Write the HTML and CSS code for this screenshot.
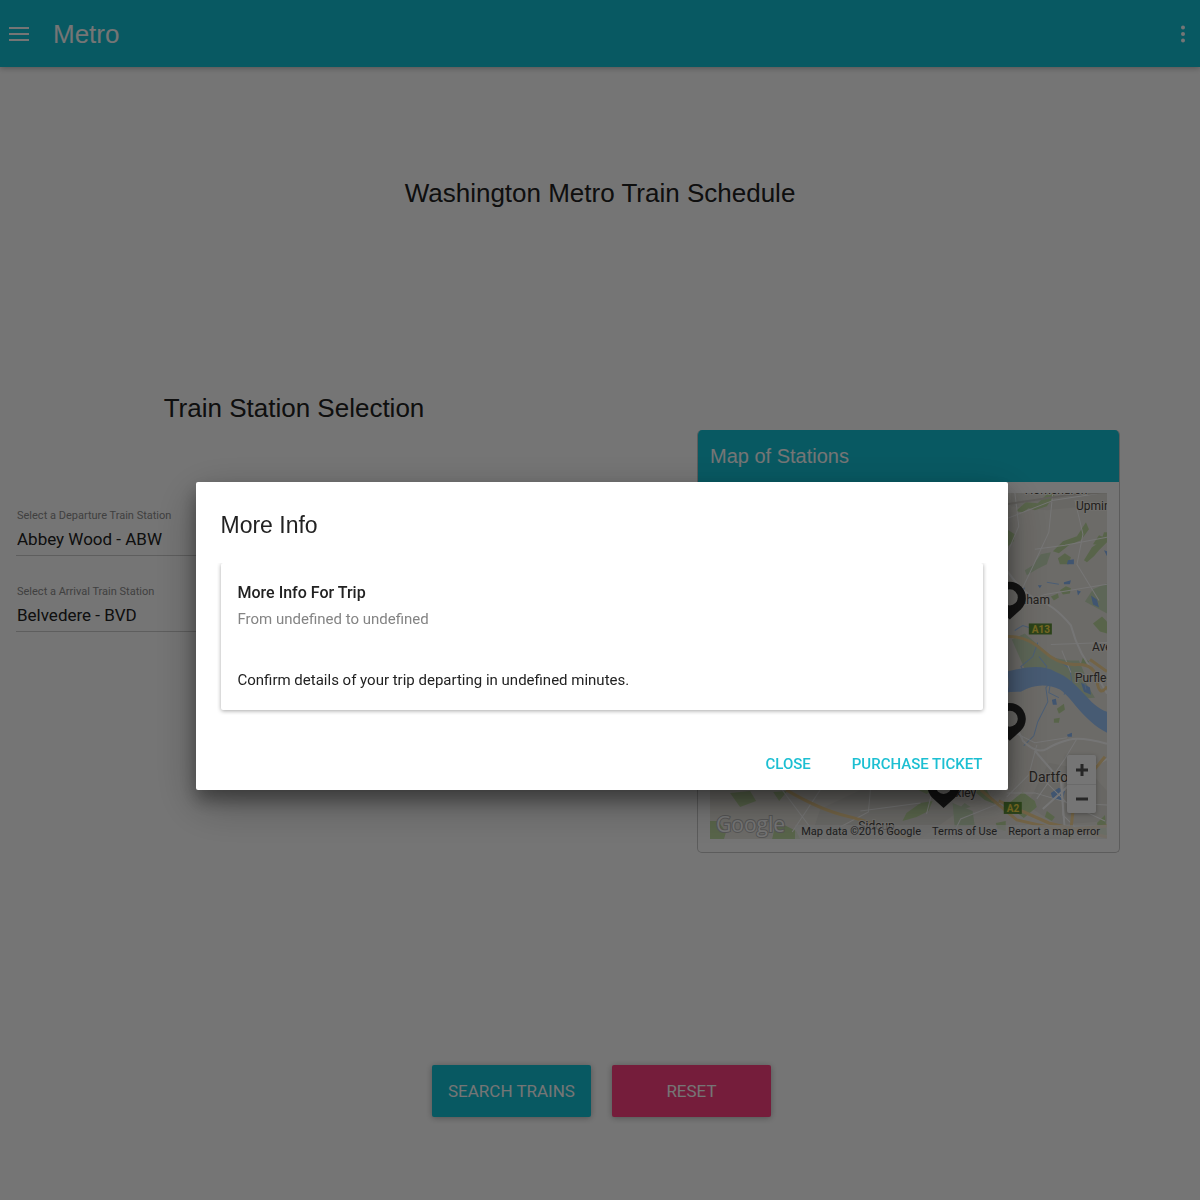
FILE: index.html
```html
<!DOCTYPE html>
<html lang="en">
<head>
<meta charset="utf-8">
<meta name="viewport" content="width=device-width, initial-scale=1">
<title>Metro</title>
<link rel="stylesheet" href="styles.css">
</head>
<body>
<header class="bar">
  <button class="icon-button" type="button" aria-label="Menu">
    <svg width="20" height="14" viewBox="0 0 20 14"><path d="M0 1h20M0 7h20M0 13h20" stroke="currentColor" stroke-width="2"/></svg>
  </button>
  <span class="brand">Metro</span>
  <button class="icon-button" type="button" aria-label="More options">
    <svg width="4" height="18" viewBox="0 0 4 18" fill="currentColor"><circle cx="2" cy="2.500" r="2"/><circle cx="2" cy="9" r="2"/><circle cx="2" cy="15.500" r="2"/></svg>
  </button>
</header>

<main>
  <h1 class="title">Washington Metro Train Schedule</h1>
  <div class="columns">
    <section class="selection">
      <h2 class="title">Train Station Selection</h2>
      <form class="fields">
        <div class="field">
          <label for="departure">Select a Departure Train Station</label>
          <select id="departure"><option>Abbey Wood - ABW</option></select>
        </div>
        <div class="field">
          <label for="arrival">Select a Arrival Train Station</label>
          <select id="arrival"><option>Belvedere - BVD</option></select>
        </div>
      </form>
    </section>

    <section class="map-card">
      <h3 class="map-heading">Map of Stations</h3>
      <div class="map-body">
        <div class="map">
          <svg class="map-canvas" viewBox="0 0 396 346" preserveAspectRatio="xMaxYMax slice">
            <rect width="396" height="346" fill="#ece9e2"/>
            <g fill="#e2e0da">
              <path d="M300 0h96v12l-60 6-36-4z"/>
              <path d="M338 270l40 8 18 20v30l-50 4-30-20z"/>
              <path d="M150 297h80l20 20-40 29h-110l10-30z"/>
            </g>
            <g fill="#c0dba2">
              <path d="M305 19l10-9 12 1 10-10h8l-9 13-12 4-6-2-6 4z"/>
              <path d="M296 37l8 5-1 7-7 6z"/>
              <path d="M342 59l10-10 14-5 9-14 3 7-8 11-12 5-10 8z"/>
              <path d="M347 66l7-5 6 4-2 7h-9z"/>
              <path d="M373 68l8-13 9-6 3-9h3v10l-8 8-5 6-7 6z"/>
              <path d="M382 52l6-9 5 2-2 8z"/>
              <path d="M340 104l7-3 1 4-5 3z"/>
              <path d="M349 98l6-4 5 2-1 5-7 1z"/>
              <path d="M382 131l9-7 5 5v12l-7-2z"/>
              <path d="M372 165l6 4-3 5-5-3z"/>
              <path d="M346 216l7-5 1 6-6 4z"/>
              <path d="M343 226l6-1-1 5h-5z"/>
              <path d="M296 312l16-13 12 9 2 6-13 11-9-7-8 3z"/>
              <path d="M386 330l8-8 2 20-7 2z"/>
              <path d="M0 328l8 0 8 11-2 7H0zM63 299l14-1-8 10zM66 328l20 10 4 8H62zM196 320l14-10 12-2-4 10-12 6-14 4zM208 297l14 0-6 4zM262 297h14l8 14-10-4zM285 330l10-2 0 10-8-2z"/>
              <path d="M20 300l20-2 6 10-16 6z"/>
              <path d="M336 318l8 6-3 4-7-4z"/>
            </g>
            <g fill="#cbdfbe">
              <path d="M322 73l8-11 10-2-4 12-10 5-10 6-2-5z"/>
              <path d="M374 109l8-12 14-6v30l-13-7z"/>
              <path d="M301 147l13-6 28 24 20 4 22 36-14 1-30-20-25-7z"/>
              <path d="M340 170l20 4 8 8-4 10-18-2zM346 168l22 0 6 14-12-4z"/>
              <path d="M242 310l20 8 2 14-20 2zM246 318l8-8 6 4z"/>
            </g>
            <g fill="#8cb9f5">
              <path d="M357 68l6-1v5h-7zM353 90l7-2-1 4h-6zM366 98l4 1-3 4zM380 103l6 4 2 8-6-3zM310 98l4-3-1 5zM327 93l4 0-2 3zM393 58l3 1v5zM341 207l4-1 1 6h-4zM370 190l9 5 1 7-7-3zM356 242l5-2v4h-4zM340 300l8-5 6 3-2 9h-10z"/>
            </g>
            <g fill="none" stroke="#a3ccff">
              <path d="M319 187l-9-13 12-10 5-14M328 164l8 10-6 8 10 6-2 12 10 5M345 166l14 10 2 14-8 12M304 138l8-5 6 2M336 90l12 2"/>
              <path d="M347 181l-12 14 2 14-10 20-4 14-10 10M372 181l3 16"/>
            </g>
            <path d="M0 160Q130 130 220 180T296 179Q330 170 344 179C368 188 378 214 396 219V240C372 228 362 206 349 197Q330 188 310 199L220 202Q130 160 0 184z" fill="#9cc6fb"/>
            <g fill="none" stroke="#fff" stroke-width="1">
              <path d="M297 26l46-18 53-8M304 0l4 34-12 28M342 0l-4 40-14 30-18 38M364 8l8 34-6 30 22 36M296 118l38-16 62-10M324 57l30-4 42-8M340 152l56-2M360 180l-9-22M296 236l28 14 32-5"/>
              <path d="M296 300l28 0 34 10 38 2M326 252l-8 30-22 22M366 246l-12 20-28 40M336 290l20 20 38 18M352 282l0 40 20 20M72 297l30 40M110 297l-28 42M160 297l-2 22-30 16M150 318l60-8M222 297l-6 24M240 346l10-20 40-16"/>
            </g>
            <g fill="none" stroke="#fff" stroke-width="2">
              <path d="M296 78q14 20 26 27c18 6 30 18 38 28q8 30 26 50l10 18"/>
              <path d="M296 224q14 16 16 24 14 14 24 8t22-9 38 4M324 258l26 30 4 50M396 266l-24 14-40 36"/>
            </g>
            <g fill="none" stroke="#f8d898" stroke-width="3">
              <path d="M296 144q20-1 36 14t34 14 20 16 10 6M379 167l17 12"/>
              <path d="M76 297q34 20 60 26t64 23M270 297l36 30 44 10 46-4M394 264l-30 36-5 46M288 308l50 22 58 14"/>
            </g>
            <path d="M296 12l60-9 40-3" fill="none" stroke="#cfcbc4" stroke-width="2"/>
            <g class="place">
              <text x="314" y="2">Hornchurch</text>
              <text x="365" y="18">Upminster</text>
              <text x="292" y="112">Rainham</text>
              <text x="381" y="158">Aveley</text>
              <text x="364" y="189">Purfleet</text>
              <text x="318" y="289" class="place-large">Dartford</text>
              <text x="231" y="304">Bexley</text>
              <text x="148" y="337">Sidcup</text>
            </g>
            <g class="road">
              <rect x="318" y="131" width="23" height="11" fill="#5f9139"/><text x="321" y="141">A13</text>
              <rect x="293" y="309" width="18" height="12" fill="#5f9139"/><text x="296" y="319">A2</text>
            </g>
            <g class="pins">
              <path d="M299 127l-11-10a16 16 0 1 1 22 0z"/><circle cx="299" cy="105" r="8"/>
              <path d="M299 248l-11-10a16 16 0 1 1 22 0z"/><circle cx="299" cy="226" r="8"/>
              <path d="M233 315l-11-10a16 16 0 1 1 22 0z"/><circle cx="233" cy="293" r="8"/>
            </g>
            <text x="6" y="339" class="google">Google</text>
          </svg>
          <div class="zoom">
            <button type="button" aria-label="Zoom in"><svg width="12" height="12" viewBox="0 0 12 12"><path d="M6 0v12M0 6h12" stroke="#555" stroke-width="3"/></svg></button>
            <button type="button" aria-label="Zoom out"><svg width="12" height="12" viewBox="0 0 12 12"><path d="M0 6h12" stroke="#555" stroke-width="3"/></svg></button>
          </div>
          <div class="credits">
            <span>Map data ©2016 Google</span>
            <a href="#terms">Terms of Use</a>
            <a href="#report">Report a map error</a>
          </div>
        </div>
      </div>
    </section>
  </div>
  <div class="actions">
    <button class="raised" type="button">SEARCH TRAINS</button>
    <button class="raised accent" type="button">RESET</button>
  </div>
</main>

<div class="overlay">
  <div class="dialog" role="dialog" aria-modal="true" aria-labelledby="dialog-title">
    <h3 class="dialog-title" id="dialog-title">More Info</h3>
    <div class="dialog-content">
      <article class="trip">
        <h4 class="trip-title">More Info For Trip</h4>
        <p class="trip-route">From undefined to undefined</p>
        <p class="trip-text">Confirm details of your trip departing in undefined minutes.</p>
      </article>
    </div>
    <div class="dialog-actions">
      <button class="flat" type="button">CLOSE</button>
      <button class="flat" type="button">PURCHASE TICKET</button>
    </div>
  </div>
</div>
</body>
</html>
```

FILE: styles.css
```css
:root {
  --teal: #12c2d6;
  --pink: #ff4081;
  --sans: "Liberation Sans", Arial, sans-serif;
}
* { box-sizing: border-box; }
body {
  margin: 0;
  background: #fff;
  color: #222;
  font-family: Roboto, sans-serif;
}
h1, h2, h3, h4, p { margin: 0; font-weight: 400; }
button { border: 0; font-family: inherit; cursor: pointer; }
svg { display: block; }

.bar {
  display: flex;
  align-items: center;
  height: 67px;
  padding: 0 13px 0 7px;
  background: var(--teal);
  color: #fff;
  box-shadow: 0 1px 6px rgba(0, 0, 0, .3);
}
.icon-button { padding: 2px; background: none; color: inherit; }
.brand { flex: 1; margin-left: 22px; font: 26px/32px var(--sans); }

.title { font: 26px/32px var(--sans); text-align: center; }
h1.title { padding-top: 110px; }
.columns { display: flex; margin-top: 183px; }
.selection { width: 49%; padding: 0 16px; }
.fields { display: grid; gap: 28px; margin-top: 84px; }
.field { display: grid; padding-top: 1px; }
.field label { padding-left: 1px; font-size: 11px; line-height: 14px; color: #8c8c8c; }
.field select {
  appearance: none;
  height: 33px;
  padding: 0 0 0 1px;
  border: 0;
  border-bottom: 1px solid #ccc;
  border-radius: 0;
  background: none;
  color: #222;
  font: 17px/20px Roboto, sans-serif;
}
.map-card {
  width: 423px;
  margin: 38px 80px 0 auto;
  border: 1px solid #c8c8c8;
  border-top: 0;
  border-radius: 5px;
  overflow: hidden;
}
.map-heading {
  margin: 0 -1px;
  padding: 10px 13px;
  background: var(--teal);
  color: #fff;
  font: 20px/32px var(--sans);
}
.map-body { padding: 11px 12px 13px; }
.map { position: relative; overflow: hidden; }
.map-canvas { width: 100%; height: 346px; }
.place { font: 12px Roboto, sans-serif; fill: #4a4540; stroke: #f4f1ec; stroke-width: 2px; paint-order: stroke; }
.place-large { font-size: 14px; }
.road { font: bold 10px Roboto, sans-serif; fill: #ffe14a; }
.pins path { fill: #2a2a2a; }
.pins circle { fill: #e4e2dc; }
.google { font: 21px "Open Sans", sans-serif; fill: #fff; stroke: #b8b8b8; stroke-width: 2px; paint-order: stroke; }
.zoom {
  position: absolute;
  right: 11px;
  bottom: 26px;
  width: 29px;
  border-radius: 2px;
  background: #fff;
  box-shadow: 0 1px 4px rgba(0, 0, 0, .3);
}
.zoom button { display: grid; place-items: center; width: 29px; height: 29px; padding: 0; background: none; }
.zoom button + button { border-top: 1px solid #e6e6e6; }
.credits {
  position: absolute;
  right: 0;
  bottom: 0;
  display: flex;
  gap: 11px;
  padding: 0 7px 0 6px;
  background: rgba(245, 245, 245, .7);
  color: #444;
  font-size: 11px;
  line-height: 14px;
}
.credits a { color: inherit; text-decoration: none; }

.actions { display: flex; justify-content: center; gap: 21px; margin-top: 212px; padding: 0 0 80px 3px; }
.raised {
  width: 159px;
  height: 52px;
  padding: 0;
  border-radius: 2px;
  background: var(--teal);
  color: #fff;
  font-size: 17px;
  box-shadow: 0 1px 6px rgba(0, 0, 0, .3);
}
.raised.accent { background: var(--pink); }

.overlay {
  position: fixed;
  inset: 0;
  display: flex;
  align-items: center;
  justify-content: center;
  padding: 72px 0 0 3px;
  background: rgba(0, 0, 0, .54);
}
.dialog {
  width: 68%;
  max-width: 812px;
  border-radius: 2px;
  background: #fff;
  box-shadow: 0 14px 45px rgba(0, 0, 0, .3), 0 10px 18px rgba(0, 0, 0, .35);
}
.dialog-title { padding: 27px 25px 22px; font: 23px/32px var(--sans); }
.dialog-content { margin: 0 21px; padding: 0 4px 5px; overflow: hidden; }
.trip { padding: 18px 17px 20px; border-radius: 2px; box-shadow: 0 1px 4px rgba(0, 0, 0, .35); }
.trip-title { font-size: 16px; line-height: 24px; font-weight: 500; }
.trip-route { padding-top: 4px; font-size: 15px; line-height: 20px; color: #848484; }
.trip-text { padding-top: 41px; font-size: 15px; line-height: 20px; }
.dialog-actions { display: flex; justify-content: flex-end; gap: 9px; padding: 30px 9px 7px; }
.flat {
  padding: 0 16px;
  height: 38px;
  background: none;
  color: #1cbfd2;
  font-size: 15px;
  font-weight: 500;
}
```
